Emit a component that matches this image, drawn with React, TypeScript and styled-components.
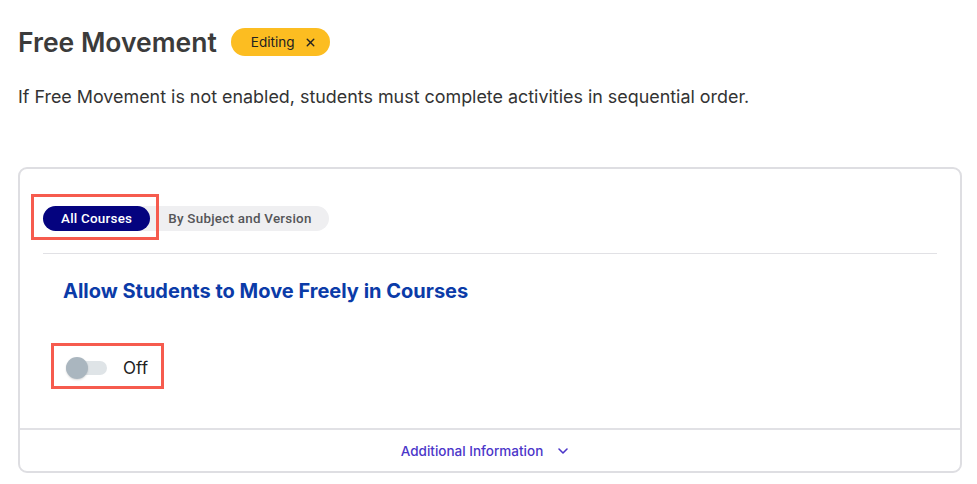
import { FC } from 'react';
import styled, { createGlobalStyle } from 'styled-components';
import { X, ChevronDown } from 'lucide-react';

const GlobalStyle = createGlobalStyle`
  html, body {
    margin: 0;
    padding: 0;
    background: #ffffff;
    font-family: Inter, "Noto Sans", sans-serif;
    color: #333;
  }
`;

export const App: FC = () => {
  return (
    <>
      <GlobalStyle />
      <Page>
        <TitleRow>
          <Title>Free Movement</Title>
          <Badge>
            Editing
            <X size={13} strokeWidth={2.6} />
          </Badge>
        </TitleRow>
        <Description>
          If Free Movement is not enabled, students must complete activities in sequential order.
        </Description>

        <Card>
          <CardBody>
            <Tabs>
              <Highlight $top={12} $right={9} $bottom={9} $left={12}>
                <Tab $active>All Courses</Tab>
              </Highlight>
              <Tab>By Subject and Version</Tab>
            </Tabs>
            <Divider />
            <Setting>
              <SettingTitle>Allow Students to Move Freely in Courses</SettingTitle>
              <Highlight $top={14} $right={16} $bottom={10} $left={15}>
                <ToggleRow>
                  <Track>
                    <Knob />
                  </Track>
                  <ToggleLabel>Off</ToggleLabel>
                </ToggleRow>
              </Highlight>
            </Setting>
          </CardBody>
          <Footer>
            <MoreLink>
              Additional Information
              <ChevronDown size={16} strokeWidth={2.4} />
            </MoreLink>
          </Footer>
        </Card>
      </Page>
    </>
  );
};

export default App;

const Page = styled.div`
  padding: 24px 15px 0 18px;
`;

const TitleRow = styled.div`
  display: flex;
  align-items: center;
  gap: 14px;
`;

const Title = styled.h1`
  margin: 0;
  font-size: 26.5px;
  font-weight: 600;
  color: #3b3b3b;
  line-height: 36px;
`;

const Badge = styled.span`
  display: inline-flex;
  align-items: center;
  gap: 10px;
  height: 28px;
  padding: 0 13px 0 20px;
  border-radius: 14px;
  background: #fcbd21;
  color: #222;
  font-size: 13.5px;
  font-weight: 400;
`;

const Description = styled.p`
  margin: 25px 0 0;
  font-size: 17.9px;
  line-height: 24px;
  color: #333;
`;

const Card = styled.section`
  margin-top: 58px;
  border: 2px solid #dedee2;
  border-radius: 9px;
  background: #fff;
`;

const CardBody = styled.div`
  padding: 37px 23px 0;
`;

const Tabs = styled.div`
  display: inline-flex;
  align-items: center;
  background: #efeff1;
  border-radius: 13px;
  height: 25px;
`;

const Tab = styled.span<{ $active?: boolean }>`
  display: inline-flex;
  align-items: center;
  height: 25px;
  padding: 0 18px;
  padding-right: ${(p) => (p.$active ? '18px' : '17px')};
  border-radius: 13px;
  background: ${(p) => (p.$active ? '#04037f' : 'transparent')};
  color: ${(p) => (p.$active ? '#ffffff' : '#555558')};
  font-family: Roboto, "Liberation Sans", sans-serif;
  font-size: 13.4px;
  font-weight: 500;
  letter-spacing: 0.25px;
`;

const Highlight = styled.div<{ $top: number; $right: number; $bottom: number; $left: number }>`
  position: relative;
  display: inline-flex;

  &::after {
    content: '';
    position: absolute;
    top: -${(p) => p.$top}px;
    right: -${(p) => p.$right}px;
    bottom: -${(p) => p.$bottom}px;
    left: -${(p) => p.$left}px;
    border: 3px solid #f65b4e;
    pointer-events: none;
  }
`;

const Divider = styled.hr`
  margin: 22px 0 0;
  border: none;
  border-top: 1px solid #e1e1e5;
`;

const Setting = styled.div`
  display: flex;
  flex-direction: column;
  align-items: flex-start;
  padding: 25px 20px 49px 23px;
  gap: 54px;
`;

const SettingTitle = styled.h2`
  margin: 0 0 0 -3px;
  font-size: 20px;
  font-weight: 700;
  line-height: 24px;
  color: #0b3ba8;
`;

const ToggleRow = styled.div`
  display: flex;
  align-items: center;
  gap: 16px;
  height: 22px;
`;

const Track = styled.div`
  position: relative;
  width: 41px;
  height: 14px;
  border-radius: 7px;
  background: #dfe4e7;
`;

const Knob = styled.span`
  position: absolute;
  left: 0;
  top: -4px;
  width: 22px;
  height: 22px;
  border-radius: 50%;
  background: #aab6bf;
  box-shadow: 0 1px 2px rgba(0, 0, 0, 0.15);
`;

const ToggleLabel = styled.span`
  font-size: 17px;
  color: #222;
`;

const Footer = styled.div`
  display: flex;
  justify-content: center;
  align-items: center;
  height: 41px;
  border-top: 2px solid #e1e1e5;
`;

const MoreLink = styled.button`
  display: inline-flex;
  align-items: center;
  gap: 12px;
  border: none;
  background: none;
  padding: 0;
  margin-left: -8px;
  font-family: Inter, sans-serif;
  font-size: 13.5px;
  font-weight: 500;
  color: #4b36c9;
  cursor: pointer;
`;
